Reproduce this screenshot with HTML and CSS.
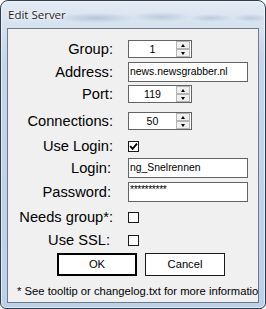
FILE: index.html
```html
<!DOCTYPE html>
<html>
<head>
<meta charset="utf-8">
<link rel="stylesheet" href="styles.css">
</head>
<body>
<div class="window">
  <div class="titlebar"><span class="title">Edit Server</span></div>
  <div class="client">
    <div class="row mt11 h18">
      <span class="lbl">Group:</span>
      <div class="spin"><span class="val">1</span><div class="spin-btns"><span class="sb up"></span><span class="sb down"></span></div></div>
    </div>
    <div class="row mt4 h20">
      <span class="lbl">Address:</span>
      <div class="text">news.newsgrabber.nl</div>
    </div>
    <div class="row mt3 h18">
      <span class="lbl">Port:</span>
      <div class="spin"><span class="val">119</span><div class="spin-btns"><span class="sb up"></span><span class="sb down"></span></div></div>
    </div>
    <div class="row mt9 h18">
      <span class="lbl">Connections:</span>
      <div class="spin"><span class="val">50</span><div class="spin-btns"><span class="sb up"></span><span class="sb down"></span></div></div>
    </div>
    <div class="row mt11 h11">
      <span class="lbl">Use Login:</span>
      <span class="check"><svg width="9" height="9" viewBox="0 0 9 9"><path d="M1.2 4.2 L3.6 6.8 L8 1.6" fill="none" stroke="#000" stroke-width="1.9"/></svg></span>
    </div>
    <div class="row mt6 h20">
      <span class="lbl pr2">Login:</span>
      <div class="text">ng_Snelrennen</div>
    </div>
    <div class="row mt4 h20">
      <span class="lbl pr2">Password:</span>
      <div class="text pass">**********</div>
    </div>
    <div class="row mt10 h11">
      <span class="lbl">Needs group*:</span>
      <span class="check"></span>
    </div>
    <div class="row mt12 h11">
      <span class="lbl pr3">Use SSL:</span>
      <span class="check"></span>
    </div>
    <div class="buttons">
      <div class="btn default">OK</div>
      <div class="btn">Cancel</div>
    </div>
    <div class="note">* See tooltip or changelog.txt for more information</div>
  </div>
</div>
</body>
</html>
```

FILE: styles.css
```css
html, body {
  margin: 0;
  padding: 0;
  background: #ffffff;
}
.window {
  width: 266px;
  height: 309px;
  box-sizing: border-box;
  border: 1px solid #2e3d4e;
  border-radius: 8px 8px 6px 6px;
  padding: 0 6px 5px 6px;
  display: flex;
  flex-direction: column;
  background:
    radial-gradient(ellipse 40px 5px at 95px 17px, rgba(120,140,165,0.35), rgba(120,140,165,0) 100%),
    radial-gradient(ellipse 30px 5px at 160px 16px, rgba(120,140,165,0.3), rgba(120,140,165,0) 100%),
    radial-gradient(ellipse 22px 4px at 210px 17px, rgba(120,140,165,0.3), rgba(120,140,165,0) 100%),
    radial-gradient(ellipse 18px 4px at 250px 17px, rgba(120,140,165,0.3), rgba(120,140,165,0) 100%),
    linear-gradient(180deg, #e3ebf5 0px, #d5e1ef 26px, #c4d6ea 60px, #bcd1e8 309px);
  box-shadow: inset 0 0 0 1px rgba(255,255,255,0.55);
  overflow: hidden;
}
.titlebar {
  height: 27px;
  flex: none;
  display: flex;
  align-items: flex-start;
  padding-left: 1px;
}
.title {
  font-family: "Open Sans", "Noto Sans", sans-serif;
  font-size: 11.5px;
  line-height: 16px;
  margin-top: 6px;
  color: #1b1b1b;
  text-shadow: 0 0 4px #ffffff, 0 0 2px #ffffff;
}
.client {
  flex: 1;
  border: 1px solid #6f7a87;
  background: #f0f0f0;
  display: flex;
  flex-direction: column;
  overflow: hidden;
}
.row {
  display: flex;
  align-items: center;
  flex: none;
}
.h18 { height: 18px; }
.h20 { height: 20px; }
.h11 { height: 11px; }
.mt3 { margin-top: 3px; }
.mt4 { margin-top: 4px; }
.mt6 { margin-top: 6px; }
.mt9 { margin-top: 9px; }
.mt10 { margin-top: 10px; }
.mt11 { margin-top: 11px; }
.mt12 { margin-top: 12px; }
.lbl {
  width: 105px;
  box-sizing: border-box;
  margin-right: 15px;
  text-align: right;
  font-family: "Liberation Sans", Arial, sans-serif;
  font-size: 14.67px;
  line-height: 17px;
  color: #000;
  white-space: nowrap;
  flex: none;
}
.pr2 { padding-right: 2px; }
.pr3 { padding-right: 3px; }
.spin {
  width: 64px;
  height: 18px;
  box-sizing: border-box;
  border: 1px solid #646464;
  background: #fff;
  display: flex;
  align-items: stretch;
}
.val {
  flex: 1;
  text-align: center;
  font-family: "Liberation Sans", Arial, sans-serif;
  font-size: 10.6px;
  line-height: 16px;
  color: #000;
}
.spin-btns {
  width: 14px;
  margin: 0 1px 0 0;
  display: flex;
  flex-direction: column;
}
.sb {
  flex: 1;
  box-sizing: border-box;
  border: 1px solid #b5b5b5;
  background: #efefef;
  display: flex;
  align-items: center;
  justify-content: center;
}
.sb::after {
  content: "";
  width: 0;
  height: 0;
  border-left: 2.5px solid transparent;
  border-right: 2.5px solid transparent;
}
.sb.up::after { border-bottom: 3px solid #000; }
.sb.down::after { border-top: 3px solid #000; }
.text {
  width: 120px;
  height: 20px;
  box-sizing: border-box;
  border: 1px solid #646464;
  background: #fff;
  padding-left: 1px;
  font-family: "Liberation Sans", Arial, sans-serif;
  font-size: 10.4px;
  line-height: 18px;
  color: #000;
  white-space: nowrap;
  overflow: hidden;
}
.pass {
  letter-spacing: -0.4px;
  line-height: 13px;
}
.check {
  width: 11px;
  height: 11px;
  box-sizing: border-box;
  border: 1px solid #1a1a1a;
  background: #fff;
  display: flex;
  align-items: center;
  justify-content: center;
  flex: none;
}
.check svg { display: block; }
.buttons {
  display: flex;
  gap: 8px;
  margin-top: 7px;
  padding-left: 49px;
  flex: none;
}
.btn {
  width: 80px;
  height: 23px;
  box-sizing: border-box;
  border: 1px solid #1a1a1a;
  background: #fff;
  font-family: "Liberation Sans", Arial, sans-serif;
  font-size: 11.2px;
  line-height: 21px;
  text-align: center;
  color: #000;
}
.btn.default {
  border: 2px solid #000;
  line-height: 19px;
}
.note {
  margin-top: 9px;
  padding-left: 9px;
  font-family: "Liberation Sans", Arial, sans-serif;
  font-size: 11.25px;
  line-height: 13px;
  color: #000;
  white-space: nowrap;
  flex: none;
}
```
